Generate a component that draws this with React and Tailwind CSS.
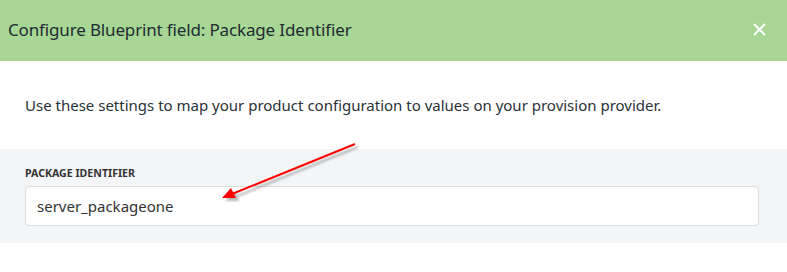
import React from "react";

export default function App() {
  return (
    <div className="relative w-[787px] h-[272px] bg-white overflow-hidden" style={{ fontFamily: '"Noto Sans", "Open Sans", sans-serif' }}>
      <div className="h-[61px] bg-[#a8d695] flex items-center justify-between pl-[8px] pr-[21px]">
        <div className="text-[17px] tracking-[-0.15px] text-[#1f2a33] leading-none pb-[2px]">Configure Blueprint field: Package Identifier</div>
        <svg width="13" height="13" viewBox="0 0 13 13" className="mb-[2px]">
          <path d="M1 1 L12 12 M12 1 L1 12" stroke="white" strokeWidth="2" fill="none" />
        </svg>
      </div>
      <div className="h-[88px] px-[25px] pt-[34px]">
        <p className="text-[15px] text-[#2a3138] leading-[20px]">Use these settings to map your product configuration to values on your provision provider.</p>
      </div>
      <div className="bg-[#f4f5f7] h-[94px] px-[25px] pt-[17px]">
        <div className="text-[10.6px] font-bold text-[#333] leading-[14px]">PACKAGE IDENTIFIER</div>
        <div className="mt-[6px] w-[734px] h-[40px] bg-white border border-[#dadce0] rounded-[4px] flex items-center px-[11px]">
          <span className="text-[15px] text-[#333]">server_packageone</span>
        </div>
      </div>
      <svg className="absolute left-0 top-0 pointer-events-none" width="787" height="272">
        <defs>
          <filter id="sh" x="-20%" y="-20%" width="140%" height="140%">
            <feGaussianBlur stdDeviation="1.2" />
          </filter>
        </defs>
        <g transform="translate(3,3)" opacity="0.35" filter="url(#sh)">
          <line x1="355" y1="144" x2="232" y2="194" stroke="#333" strokeWidth="2" />
          <polygon points="222,198 232,188 236,198" fill="#333" />
        </g>
        <line x1="355" y1="144" x2="232" y2="194" stroke="#ff0000" strokeWidth="2" />
        <polygon points="222,198 231,188 236,198" fill="#ff0000" />
      </svg>
    </div>
  );
}
